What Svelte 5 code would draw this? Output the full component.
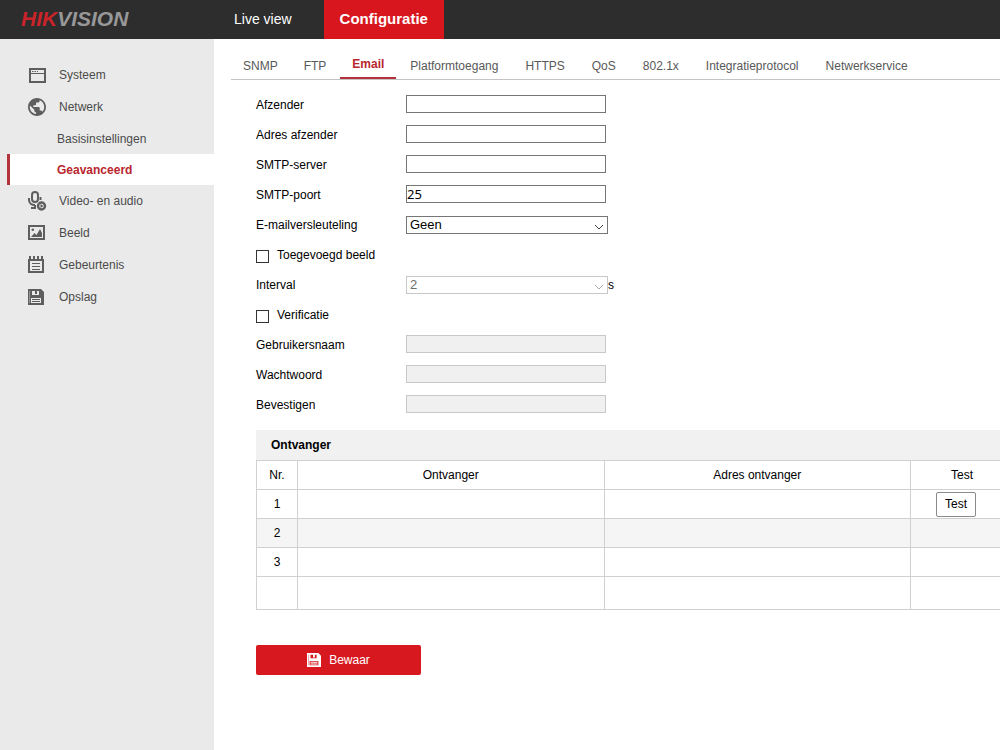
<script>
  const menu = [
    { label: 'Systeem', icon: 'window' },
    { label: 'Netwerk', icon: 'globe' },
    { label: 'Basisinstellingen', sub: true },
    { label: 'Geavanceerd', sub: true, active: true },
    { label: 'Video- en audio', icon: 'mic' },
    { label: 'Beeld', icon: 'image' },
    { label: 'Gebeurtenis', icon: 'event' },
    { label: 'Opslag', icon: 'disk' },
  ];

  const tabs = [
    'SNMP',
    'FTP',
    'Email',
    'Platformtoegang',
    'HTTPS',
    'QoS',
    '802.1x',
    'Integratieprotocol',
    'Netwerkservice',
  ];

  let activeTab = $state('Email');
  let sender = $state('');
  let senderAddress = $state('');
  let server = $state('');
  let port = $state('25');
  let encryption = $state('Geen');
  let attachImage = $state(false);
  let interval = $state('2');
  let authentication = $state(false);
  let username = $state('');
  let password = $state('');
  let confirm = $state('');

  const receivers = [1, 2, 3];
</script>

{#snippet disk(size)}
  <svg width={size} height={size} viewBox="0 0 16 16">
    <path
      fill="currentColor"
      fill-rule="evenodd"
      d="M0 0H13L16 3V16H0ZM4 2V6H11V2H9V5H7V2ZM3 9V14H13V9ZM4 10H12V11H4ZM4 12H12V13H4ZM2 2V14H1.6V2Z"
    />
  </svg>
{/snippet}

{#snippet icon(name)}
  {#if name === 'window'}
    <svg width="18" height="16" viewBox="0 0 18 16" fill="none" stroke="currentColor">
      <path d="M2 2H17V15H2Z" stroke-width="2" />
      <path d="M2 6.5H17" />
      <path d="M4 4.5H5.5M6.5 4.5H8M9 4.5H10" />
    </svg>
  {:else if name === 'globe'}
    <svg width="18" height="18" viewBox="2 2 20 20">
      <path
        fill="currentColor"
        d="M12 2C6.5 2 2 6.5 2 12s4.500 10 10 10 10-4.500 10-10S17.500 2 12 2zM11 19.900c-4-.5-7-3.900-7-7.900 0-.6.1-1.200.2-1.800L9 15v1c0 1.100.9 2 2 2zM17.900 17.400c-.3-.8-1-1.400-1.900-1.400h-1v-3c0-.6-.4-1-1-1H8v-2h2c.6 0 1-.4 1-1V7h2c1.100 0 2-.9 2-2v-.4c2.900 1.200 5 4.100 5 7.400 0 2.100-.8 4-2.100 5.400z"
      />
    </svg>
  {:else if name === 'mic'}
    <svg width="19" height="20" viewBox="0 0 19 20" fill="none" stroke="currentColor">
      <rect x="4" y="1" width="6" height="10" rx="3" stroke-width="2" />
      <path d="M1 7V9C1 12 3.500 14 7 14M12.500 6V9M7 14V17M3 17H8" stroke-width="2" />
      <circle cx="13.500" cy="15" r="3.500" stroke-width="2.400" />
      <path d="M12.500 13L15.500 15L12.500 17Z" fill="currentColor" stroke="none" />
    </svg>
  {:else if name === 'image'}
    <svg width="18" height="16" viewBox="0 0 18 16">
      <path d="M1 1H16V14H1Z" fill="none" stroke="currentColor" stroke-width="2" />
      <circle cx="4.800" cy="4.800" r="1.300" fill="currentColor" />
      <path d="M3 12L6.500 8L8.500 10L12 4L14 8V12Z" fill="currentColor" />
    </svg>
  {:else if name === 'event'}
    <svg width="16" height="18" viewBox="0 0 16 18" fill="none" stroke="currentColor">
      <path d="M1 4H15V16H1Z" stroke-width="2" />
      <path d="M2 0V4M6 0V4M10 0V4M14 0V4" stroke-width="2" />
      <path d="M4 7.500H12M4 10.500H12M4 13.500H12" />
    </svg>
  {:else}
    {@render disk(16)}
  {/if}
{/snippet}

<div class="page">
  <header class="topbar">
    <div class="logo"><span>HIK</span>VISION</div>
    <nav class="main-nav">
      <a href="#live">Live view</a>
      <a href="#config" class="active">Configuratie</a>
    </nav>
  </header>

  <div class="body">
    <aside class="sidebar">
      {#each menu as item}
        <a href="#{item.label}" class="menu-item" class:sub={item.sub} class:active={item.active}>
          {#if item.icon}
            <span class="menu-icon">{@render icon(item.icon)}</span>
          {/if}
          {item.label}
        </a>
      {/each}
    </aside>

    <main class="content">
      <nav class="tabs">
        {#each tabs as tab}
          <a href="#{tab}" class:active={activeTab === tab} onclick={() => (activeTab = tab)}>{tab}</a>
        {/each}
      </nav>

      <form class="settings" onsubmit={(e) => e.preventDefault()}>
        <div class="row">
          <label for="sender">Afzender</label>
          <input id="sender" type="text" bind:value={sender} />
        </div>
        <div class="row">
          <label for="sender-address">Adres afzender</label>
          <input id="sender-address" type="text" bind:value={senderAddress} />
        </div>
        <div class="row">
          <label for="server">SMTP-server</label>
          <input id="server" type="text" bind:value={server} />
        </div>
        <div class="row">
          <label for="port">SMTP-poort</label>
          <input id="port" type="text" bind:value={port} />
        </div>
        <div class="row">
          <label for="encryption">E-mailversleuteling</label>
          <div class="select">
            <select id="encryption" bind:value={encryption}>
              <option>Geen</option>
              <option>SSL</option>
              <option>TLS</option>
            </select>
            <svg width="10" height="6" viewBox="0 0 10 6"><path d="M1 1L5 5L9 1" /></svg>
          </div>
        </div>
        <div class="row check">
          <input id="attach" type="checkbox" bind:checked={attachImage} />
          <label for="attach">Toegevoegd beeld</label>
        </div>
        <div class="row">
          <label for="interval">Interval</label>
          <div class="select" class:disabled={!attachImage}>
            <select id="interval" bind:value={interval} disabled={!attachImage}>
              <option>2</option>
              <option>3</option>
              <option>4</option>
              <option>5</option>
            </select>
            <svg width="10" height="6" viewBox="0 0 10 6"><path d="M1 1L5 5L9 1" /></svg>
          </div>
          <span>s</span>
        </div>
        <div class="row check">
          <input id="auth" type="checkbox" bind:checked={authentication} />
          <label for="auth">Verificatie</label>
        </div>
        <div class="row">
          <label for="username">Gebruikersnaam</label>
          <input id="username" type="text" bind:value={username} disabled={!authentication} />
        </div>
        <div class="row">
          <label for="password">Wachtwoord</label>
          <input id="password" type="password" bind:value={password} disabled={!authentication} />
        </div>
        <div class="row">
          <label for="confirm">Bevestigen</label>
          <input id="confirm" type="password" bind:value={confirm} disabled={!authentication} />
        </div>

        <section class="receivers">
          <h2>Ontvanger</h2>
          <table>
            <thead>
              <tr>
                <th class="nr">Nr.</th>
                <th>Ontvanger</th>
                <th>Adres ontvanger</th>
                <th class="test">Test</th>
              </tr>
            </thead>
            <tbody>
              {#each receivers as nr}
                <tr>
                  <td>{nr}</td>
                  <td></td>
                  <td></td>
                  <td>
                    {#if nr === 1}
                      <button type="button" class="test-btn">Test</button>
                    {/if}
                  </td>
                </tr>
              {/each}
              <tr class="last">
                <td></td>
                <td></td>
                <td></td>
                <td></td>
              </tr>
            </tbody>
          </table>
        </section>

        <button type="submit" class="save-btn">
          {@render disk(14)}
          Bewaar
        </button>
      </form>
    </main>
  </div>
</div>

<style>
  :global(body) {
    background: #fff;
  }

  .page {
    display: flex;
    flex-direction: column;
    min-height: 100vh;
    overflow: hidden;
    font-family: 'Liberation Sans', Arial, sans-serif;
    font-size: 12px;
    color: #000;
  }

  a {
    color: inherit;
    text-decoration: none;
  }

  svg {
    display: block;
  }

  .topbar {
    display: flex;
    height: 39px;
    background: #2d2d2d;
    color: #fff;
  }

  .logo {
    box-sizing: border-box;
    width: 214px;
    padding-left: 21px;
    font-size: 21px;
    font-weight: bold;
    font-style: italic;
    line-height: 38px;
    color: #989898;
  }

  .logo span {
    color: #c9242a;
  }

  .main-nav {
    display: flex;
    font-size: 14px;
    line-height: 38px;
  }

  .main-nav a {
    padding: 0 32px 0 20px;
  }

  .main-nav .active {
    padding: 0 16px;
    background: #d7161d;
    font-size: 15px;
    font-weight: bold;
  }

  .body {
    display: flex;
    flex: 1;
  }

  .sidebar {
    box-sizing: border-box;
    flex: none;
    width: 214px;
    padding-top: 20px;
    background: #eaeaea;
  }

  .menu-item {
    display: flex;
    align-items: center;
    height: 32px;
    padding-left: 28px;
    color: #4b4b4b;
  }

  .menu-icon {
    width: 31px;
    color: #5e5e5e;
  }

  .sub {
    height: 31px;
    padding-left: 57px;
  }

  .sub.active {
    margin-left: 7px;
    padding-left: 47px;
    border-left: 3px solid #b2333a;
    background: #fff;
    color: #b8262e;
    font-weight: bold;
  }

  .content {
    flex: 1;
    min-width: 0;
    padding-left: 17px;
  }

  .tabs {
    display: flex;
    gap: 2px;
    height: 40px;
    border-bottom: 1px solid #c4c4c4;
    line-height: 54px;
    color: #585858;
  }

  .tabs a {
    padding: 0 12px;
    white-space: nowrap;
  }

  .tabs .active {
    box-sizing: border-box;
    height: 40px;
    border-bottom: 2px solid #b5323a;
    line-height: 50px;
    color: #b8262e;
    font-weight: bold;
  }

  .tabs .active ~ a {
    padding-right: 13px;
  }

  .settings {
    padding: 10px 0 0 25px;
  }

  .row {
    display: flex;
    align-items: center;
    height: 30px;
  }

  .row label {
    width: 150px;
  }

  .row input[type='text'],
  .row input[type='password'] {
    box-sizing: border-box;
    width: 200px;
    height: 18px;
    margin: 0 0 2px;
    padding: 0;
    border: 1px solid #767676;
    background: #fff;
    font-family: 'Noto Sans', sans-serif;
    font-size: 13px;
  }

  .row input:disabled {
    border-color: #c8c8c8;
    background: #f0f0f0;
  }

  .select {
    position: relative;
    width: 202px;
  }

  select {
    display: block;
    box-sizing: border-box;
    appearance: none;
    width: 100%;
    height: 18px;
    padding: 0 16px 0 3px;
    border: 1px solid #767676;
    border-radius: 0;
    background: #fff;
    font-family: inherit;
    font-size: 13px;
    line-height: 16px;
    color: #000;
  }

  .select svg {
    position: absolute;
    top: 8px;
    right: 4px;
    fill: none;
    stroke: #444;
    pointer-events: none;
  }

  .disabled select {
    border-color: #c8c8c8;
    color: #6d6d6d;
    opacity: 1;
  }

  .disabled svg {
    stroke: #aaa;
  }

  .check {
    gap: 8px;
  }

  .check input {
    appearance: none;
    box-sizing: border-box;
    width: 13px;
    height: 13px;
    margin: 3px 0 0;
    border: 1px solid #333;
    background: #fff;
  }

  .check input:checked {
    background: #333;
    box-shadow: inset 0 0 0 2px #fff;
  }

  .receivers {
    min-width: 758px;
    margin-top: 10px;
  }

  h2 {
    margin: 0;
    padding-left: 15px;
    background: #f1f1f1;
    font-size: 12px;
    line-height: 30px;
  }

  table {
    width: 100%;
    table-layout: fixed;
    border-collapse: collapse;
  }

  th,
  td {
    height: 28px;
    padding: 0;
    border: 1px solid #d0d0d0;
    font-weight: normal;
    text-align: center;
  }

  .nr {
    width: 40px;
  }

  .test {
    width: 102px;
  }

  tbody tr:nth-child(2) {
    background: #f5f5f5;
  }

  .last td {
    height: 32px;
  }

  .test-btn {
    display: block;
    box-sizing: border-box;
    height: 25px;
    margin: 0 auto 0 25px;
    padding: 0 8px;
    border: 1px solid #8a8a8a;
    border-radius: 2px;
    background: #fff;
    font: inherit;
    color: #000;
  }

  .save-btn {
    display: flex;
    align-items: center;
    justify-content: center;
    gap: 8px;
    width: 165px;
    height: 30px;
    margin-top: 35px;
    padding: 0;
    border: 0;
    border-radius: 2px;
    background: #d7191f;
    font: inherit;
    color: #fff;
  }
</style>
